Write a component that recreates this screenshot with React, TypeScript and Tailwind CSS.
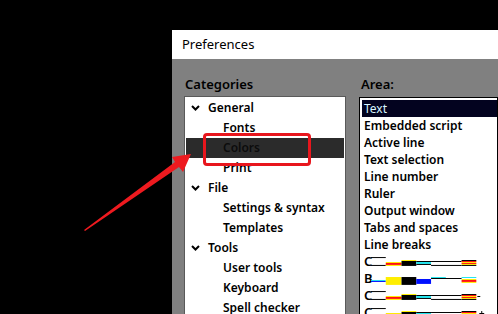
import React from 'react';

const font = { fontFamily: '"Noto Sans", "Open Sans", sans-serif' };

type TreeItem = { label: string; level: 0 | 1; selected?: boolean };

const tree: TreeItem[] = [
  { label: 'General', level: 0 },
  { label: 'Fonts', level: 1 },
  { label: 'Colors', level: 1, selected: true },
  { label: 'Print', level: 1 },
  { label: 'File', level: 0 },
  { label: 'Settings & syntax', level: 1 },
  { label: 'Templates', level: 1 },
  { label: 'Tools', level: 0 },
  { label: 'User tools', level: 1 },
  { label: 'Keyboard', level: 1 },
  { label: 'Spell checker', level: 1 },
];

const areas = [
  'Text',
  'Embedded script',
  'Active line',
  'Text selection',
  'Line number',
  'Ruler',
  'Output window',
  'Tabs and spaces',
  'Line breaks',
];

const Chevron = () => (
  <svg width="9" height="6" viewBox="0 0 9 6" className="mr-[8px] ml-[5px]">
    <path d="M1 1 L4.5 4.5 L8 1" fill="none" stroke="#000" strokeWidth="2" />
  </svg>
);

// colour preview strips below the area list
const StripA = ({ tail }: { tail?: string }) => (
  <svg width="128" height="17" viewBox="0 0 128 17">
    <rect x="0" y="4" width="15" height="1" fill="#000" />
    <rect x="0" y="12" width="15" height="1" fill="#000" />
    <rect x="15" y="9" width="16" height="1" fill="#ffee00" />
    <rect x="15" y="10" width="16" height="2" fill="#ff1010" />
    <rect x="15" y="12" width="16" height="1" fill="#ffee00" />
    <rect x="31" y="7" width="15" height="1" fill="#ffee00" />
    <rect x="31" y="8" width="15" height="5" fill="#000" />
    <rect x="46" y="8" width="15" height="1" fill="#000" />
    <rect x="46" y="9" width="15" height="2" fill="#22e6f0" />
    <rect x="46" y="11" width="15" height="1" fill="#000" />
    <rect x="61" y="8" width="31" height="1" fill="#000" />
    <rect x="61" y="12" width="31" height="1" fill="#000" />
    <rect x="92" y="7" width="15" height="1" fill="#000" />
    <rect x="92" y="8" width="15" height="1" fill="#ff1010" />
    <rect x="92" y="9" width="15" height="1" fill="#ffee00" />
    <rect x="92" y="10" width="15" height="1" fill="#ff1010" />
    <rect x="92" y="11" width="15" height="1" fill="#ffee00" />
    <rect x="92" y="12" width="15" height="1" fill="#000" />
    {tail === '-' && <rect x="108" y="9" width="3" height="1" fill="#000" />}
    {tail === '+' && (
      <>
        <rect x="110" y="9" width="5" height="1" fill="#000" />
        <rect x="112" y="7" width="1" height="5" fill="#000" />
      </>
    )}
  </svg>
);

const StripB = () => (
  <svg width="128" height="17" viewBox="0 0 128 17">
    <rect x="0" y="10" width="15" height="1" fill="#22e6f0" />
    <rect x="0" y="11" width="15" height="1" fill="#0010ff" />
    <rect x="15" y="7" width="16" height="8" fill="#ffee00" />
    <rect x="31" y="7" width="15" height="8" fill="#000" />
    <rect x="46" y="9" width="15" height="5" fill="#0010ff" />
    <rect x="61" y="7" width="15" height="1" fill="#22e6f0" />
    <rect x="61" y="8" width="31" height="1" fill="#000" />
    <rect x="92" y="7" width="15" height="1" fill="#22e6f0" />
    <rect x="92" y="9" width="15" height="1" fill="#ffee00" />
    <rect x="92" y="10" width="15" height="2" fill="#ff1010" />
    <rect x="92" y="12" width="15" height="1" fill="#ffee00" />
  </svg>
);

const StripRow = ({ letter, children }: { letter: string; children: React.ReactNode }) => (
  <div className="flex h-[17px] items-center pl-[2px]">
    <span className="w-[7px] text-[13px] font-semibold leading-none text-black">{letter}</span>
    {children}
  </div>
);

const App = () => {
  return (
    <div className="relative flex h-[314px] w-[498px] overflow-hidden bg-black pl-[172px] pt-[30px]" style={font}>
      {/* Dialog */}
      <div className="flex min-w-0 flex-1 flex-col">
        <div className="flex h-[29px] shrink-0 items-center bg-white pl-[10px] text-[13px] text-black">
          Preferences
        </div>
        <div className="flex flex-1 gap-[13px] bg-[#808080] pl-[12px] pt-[17px]">
          {/* Categories */}
          <div className="flex w-[162px] shrink-0 flex-col">
            <div className="h-[16px] pl-[1px] text-[13px] font-semibold leading-[16px] text-black">Categories</div>
            <div className="mt-[4px] flex-1 border border-[#5a5a5a] bg-white p-px">
              {tree.map((item) => (
                <div
                  key={item.label}
                  className={`flex h-[20px] items-center text-[12px] font-semibold ${
                    item.selected ? 'bg-[#2b2b2b] text-[#0c0c0c]' : 'text-black'
                  } ${item.level === 1 ? 'pl-[37px]' : ''}`}
                >
                  {item.level === 0 && <Chevron />}
                  {item.label}
                </div>
              ))}
            </div>
          </div>

          {/* Area */}
          <div className="flex min-w-0 flex-1 flex-col">
            <div className="h-[16px] pl-[2px] text-[13px] font-semibold leading-[16px] text-black">Area:</div>
            <div className="mt-[5px] flex-1 border border-black bg-white p-[2px] pr-0">
              {areas.map((a, i) => (
                <div
                  key={a}
                  className={`flex h-[17px] items-center px-[2px] text-[12px] ${
                    i === 0 ? 'bg-[#03031f] font-normal text-[#d8f6ff]' : 'font-semibold text-black'
                  }`}
                >
                  {a}
                </div>
              ))}
              <StripRow letter="C">
                <StripA />
              </StripRow>
              <StripRow letter="B">
                <StripB />
              </StripRow>
              <StripRow letter="C">
                <StripA tail="-" />
              </StripRow>
              <StripRow letter="C">
                <StripA tail="+" />
              </StripRow>
            </div>
          </div>
        </div>
      </div>

      {/* Annotation: red box around Colors */}
      <div className="absolute left-[203px] top-[133px] h-[33px] w-[108px] rounded-[4px] border-[3px] border-[#e8161d]" />

      {/* Annotation: red arrow */}
      <svg className="absolute left-0 top-0" width="498" height="314" viewBox="0 0 498 314">
        <polygon
          points="84,230 175,162 172,157 191,154 183,172 179,167 85,231"
          fill="#ee1a1f"
        />
      </svg>
    </div>
  );
};

export default App;
